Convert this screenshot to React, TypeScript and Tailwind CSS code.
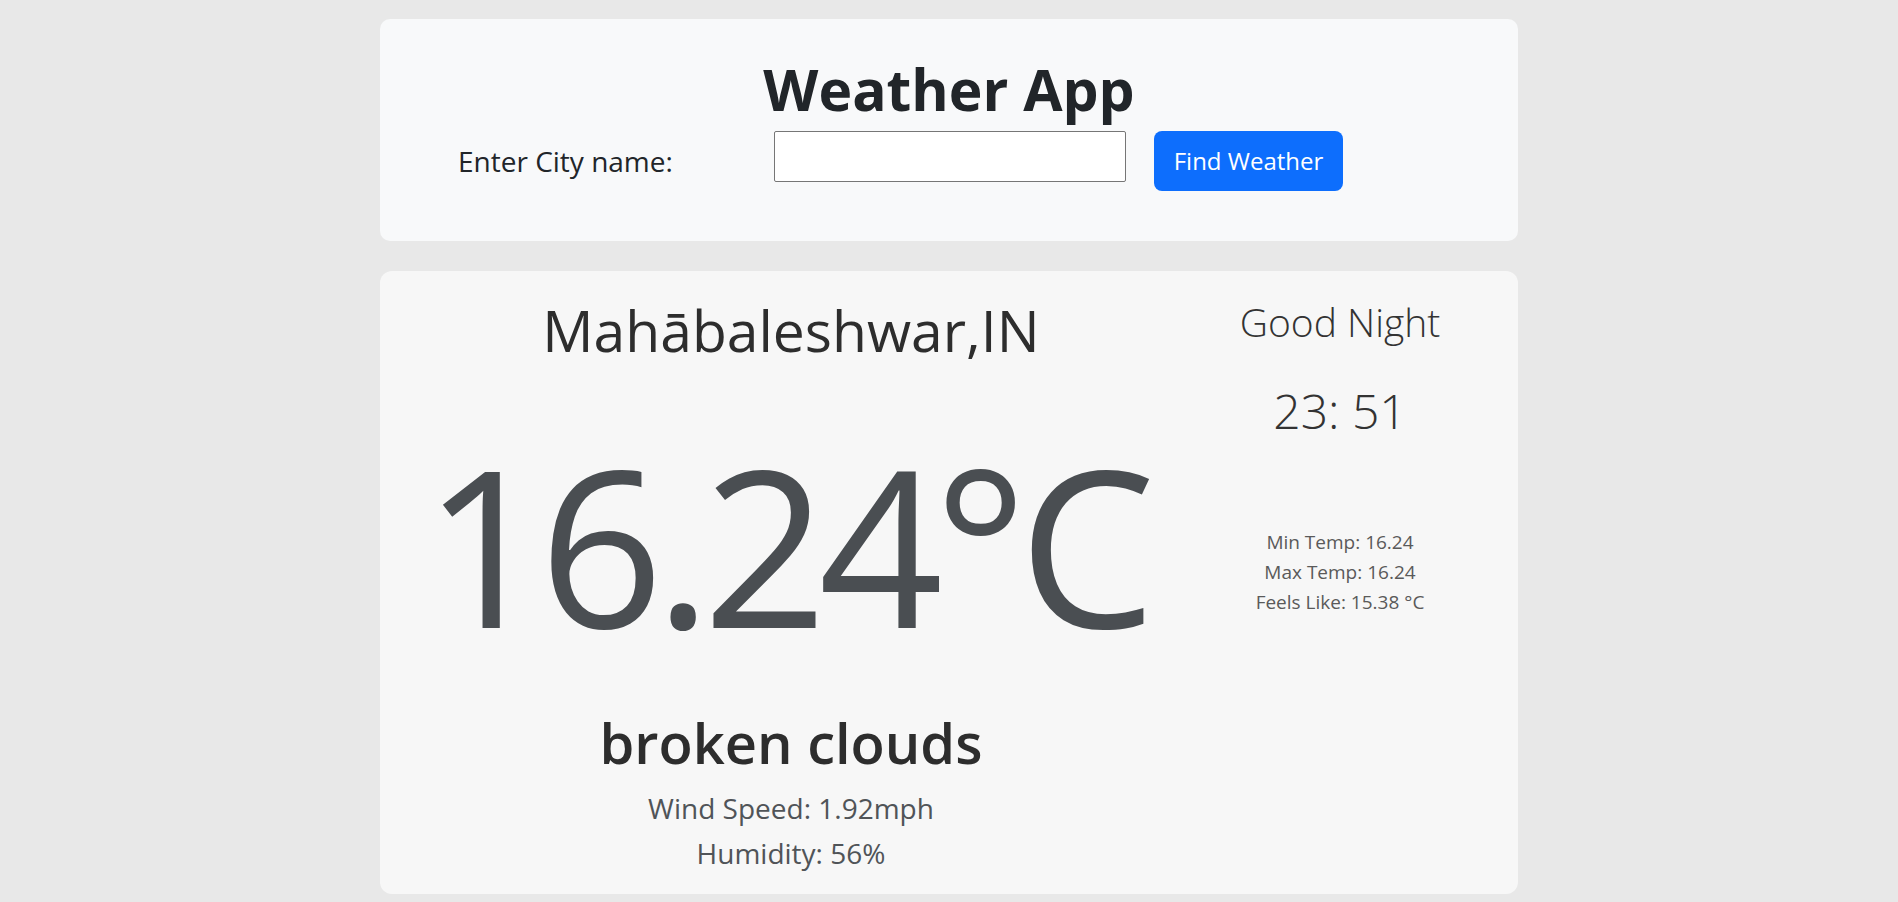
import { useState } from "react";

const weather = {
    city: "Mahābaleshwar,IN",
    temp: "16.24",
    description: "broken clouds",
    wind: "1.92",
    humidity: "56",
    min: "16.24",
    max: "16.24",
    feelsLike: "15.38",
    time: "23: 51",
    greeting: "Good Night",
};

export default function App() {
    const [city, setCity] = useState("");

    return (
        <div className="min-h-screen bg-[#e8e8e8] pt-[19px] pb-[8px] font-['Open_Sans',sans-serif]">
            <div className="mx-auto w-[1138px] flex flex-col gap-[30px]">
                {/* Search card */}
                <div className="h-[222px] rounded-[10px] bg-[#f8f9fa] pt-[35px]">
                    <h1 className="text-center text-[57px] leading-[70px] font-bold text-[#212529]">Weather App</h1>
                    <div className="mt-[7px] flex items-start pl-[78px]">
                        <label htmlFor="city" className="mt-[12px] w-[316px] text-[28px] leading-[36px] text-[#212529]">
                            Enter City name:
                        </label>
                        <input
                            id="city"
                            value={city}
                            onChange={(e) => setCity(e.target.value)}
                            className="h-[51px] w-[352px] rounded-[2px] border border-[#767676] bg-white px-2 text-[24px] outline-none"
                        />
                        <button className="ml-[28px] flex h-[60px] w-[189px] items-center justify-center rounded-lg bg-[#0d6efd] text-[24px] leading-[36px] text-white">
                            Find Weather
                        </button>
                    </div>
                </div>

                {/* Result card */}
                <div className="flex h-[623px] rounded-xl bg-[#f7f7f7] px-[20px]">
                    <div className="flex w-[782px] flex-col items-center pt-[25px]">
                        <h2 className="text-[57px] leading-[68px] text-[#2d2d2d]">{weather.city}</h2>
                        <div className="mt-[60px] whitespace-nowrap pr-[12px] text-[218px] leading-[240px] tracking-[-9px] text-[#4a4e52]">
                            {weather.temp}°C
                        </div>
                        <h3 className="mt-[44px] text-[56px] leading-[68px] font-semibold text-[#2d2d2d]">{weather.description}</h3>
                        <div className="mt-[10px] text-center text-[28px] leading-[45px] text-[#505458]">
                            <p>Wind Speed: {weather.wind}mph</p>
                            <p>Humidity: {weather.humidity}%</p>
                        </div>
                    </div>
                    <div className="flex flex-1 flex-col items-center pt-[28px] text-center">
                        <p className="text-[39px] leading-[46px] font-[350] text-[#333333]">{weather.greeting}</p>
                        <p className="mt-[37px] text-[48px] leading-[58px] font-[350] text-[#333333]">{weather.time}</p>
                        <div className="mt-[87px] text-[19px] leading-[30px] text-[#5a5a5a]">
                            <p>Min Temp: {weather.min}</p>
                            <p>Max Temp: {weather.max}</p>
                            <p>Feels Like: {weather.feelsLike} °C</p>
                        </div>
                    </div>
                </div>
            </div>
        </div>
    );
}
